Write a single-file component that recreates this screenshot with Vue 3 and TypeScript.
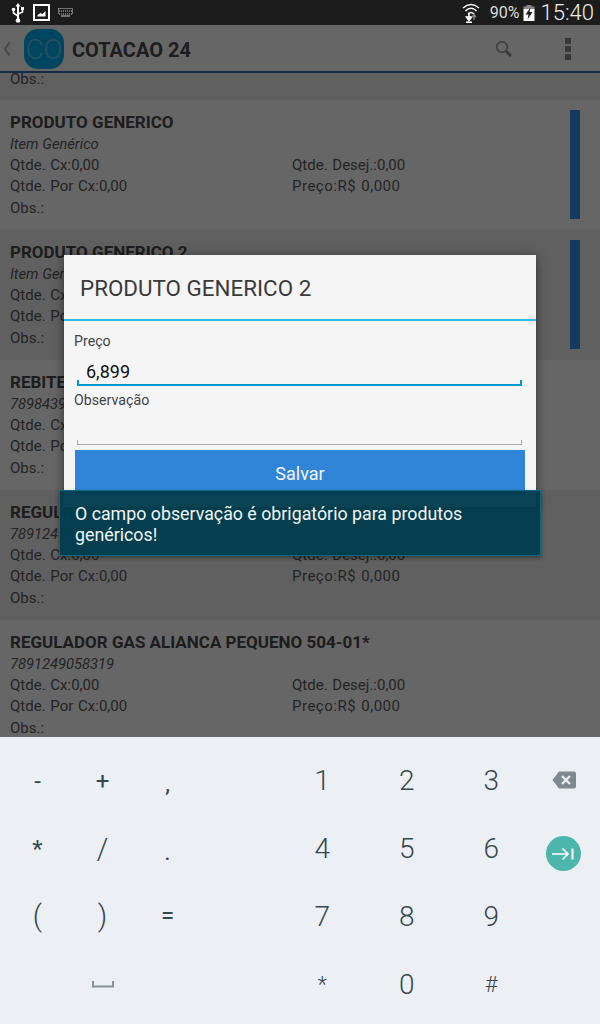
<script setup lang="ts">
interface Produto {
  nome: string
  codigo: string
  marcado?: boolean
}

const produtos: Produto[] = [
  { nome: 'PRODUTO GENERICO', codigo: 'Item Genérico', marcado: true },
  { nome: 'PRODUTO GENERICO 2', codigo: 'Item Genérico', marcado: true },
  { nome: 'REBITE POP 4,0 X 12', codigo: '7898439102214' },
  { nome: 'REGULADOR GAS ALIANCA PEQUENO', codigo: '7891249058319' },
  { nome: 'REGULADOR GAS ALIANCA PEQUENO 504-01*', codigo: '7891249058319' },
]

const simbolos = ['-', '+', ',', '*', '/', '.', '(', ')', '=', '', 'espaco', '']
const numeros = ['1', '2', '3', '4', '5', '6', '7', '8', '9', '*', '0', '#']
</script>

<template>
  <div class="tela">
    <div class="status">
      <div class="status-esq">
        <svg width="14" height="22" viewBox="0 0 14 22">
          <path d="M7 1 L9.5 4.5 H8 V17 H6 V4.5 H4.5 Z" fill="#fff" />
          <path d="M7 14 L2.5 11 V8" stroke="#fff" stroke-width="1.6" fill="none" />
          <path d="M7 12 L11.5 10 V7.5" stroke="#fff" stroke-width="1.6" fill="none" />
          <circle cx="2.5" cy="7.5" r="1.8" fill="#fff" />
          <rect x="10" y="5" width="3" height="3" fill="#fff" />
          <circle cx="7" cy="18.5" r="2.3" fill="#fff" />
        </svg>
        <svg class="ic-img" width="17" height="17" viewBox="0 0 17 17">
          <rect x="1" y="1" width="15" height="15" fill="#1c1c1c" stroke="#fff" stroke-width="2" />
          <path d="M4.5 12.5 V11 L7.5 9 L9.5 10 L12.5 7 V12.5 Z" fill="#fff" />
        </svg>
        <svg class="ic-kbd" width="15" height="9" viewBox="0 0 15 9">
          <rect x="0.5" y="0.5" width="14" height="5.5" fill="none" stroke="#ccc" stroke-width="1" stroke-dasharray="1 1" />
          <path d="M1 3 H14" stroke="#ccc" stroke-width="1" stroke-dasharray="1 1" />
          <path d="M3 8 H12" stroke="#ccc" stroke-width="1" />
        </svg>
      </div>
      <div class="status-dir">
        <svg width="18" height="22" viewBox="0 0 18 22">
          <path d="M1 6 Q9 -1 17 6 M3.5 9 Q9 3.5 14.5 9 M6 12 Q9 9 12 12" stroke="#fff" stroke-width="1.6" fill="none" />
          <path d="M7 11 V17 M4.5 15 L7 18.5 L9.5 15 Z" stroke="#fff" stroke-width="1.6" fill="#fff" />
          <path d="M12 18 V13 M10.5 14.5 L12 12 L13.5 14.5 Z" stroke="#888" stroke-width="1.3" fill="#888" />
          <rect x="4" y="19.5" width="6" height="1.5" fill="#fff" />
        </svg>
        <span class="pct">90%</span>
        <svg class="ic-bat" width="12" height="16" viewBox="0 0 12 16">
          <rect x="3.5" y="0" width="5" height="2" fill="#888" />
          <rect x="0.5" y="1.5" width="11" height="3" fill="#888" />
          <rect x="0.5" y="4" width="11" height="12" fill="#fff" />
          <path d="M7.5 2.5 L2.5 9.5 H5.5 L4.5 14.5 L9.5 7 H6.5 Z" fill="#1c1c1c" />
        </svg>
        <span class="hora">15:40</span>
      </div>
    </div>

    <div class="corpo">
      <header class="topo">
        <span class="voltar">
          <svg width="8" height="16" viewBox="0 0 8 16">
            <path d="M6.5 1.5 L2 8 L6.5 14.5" stroke="#bbb" stroke-width="2.2" fill="none" />
          </svg>
        </span>
        <span class="logo">CO</span>
        <span class="titulo">COTACAO 24</span>
        <svg class="ic-busca" width="18" height="18" viewBox="0 0 18 18">
          <circle cx="7" cy="7" r="5.3" stroke="#909090" stroke-width="1.4" fill="none" />
          <path d="M11 11 L16 16" stroke="#909090" stroke-width="3" />
        </svg>
        <span class="menu"><i></i><i></i><i></i></span>
      </header>

      <main class="lista">
        <div class="resto">Obs.:</div>
        <div v-for="(p, i) in produtos" :key="i" class="linha" :class="{ par: i % 2 === 1 }">
          <div class="nome">{{ p.nome }}</div>
          <div class="codigo">{{ p.codigo }}</div>
          <div class="campos">
            <span>Qtde. Cx:0,00</span>
            <span>Qtde. Desej.:0,00</span>
            <span>Qtde. Por Cx:0,00</span>
            <span class="preco">Preço:R$ 0,000</span>
          </div>
          <div class="obs">Obs.:</div>
          <span v-if="p.marcado" class="barra"></span>
        </div>
      </main>

      <div class="escuro"></div>

      <section class="dialogo">
        <h3>PRODUTO GENERICO 2</h3>
        <div class="form">
          <label>Preço</label>
          <div class="campo ativo">6,899</div>
          <label class="segundo">Observação</label>
          <div class="campo"></div>
          <button class="salvar">Salvar</button>
        </div>
      </section>

      <div class="toast">O campo observação é obrigatório para produtos genéricos!</div>
    </div>

    <div class="teclado">
      <div class="grade simbolos">
        <span
          v-for="(t, i) in simbolos"
          :key="i"
          class="tecla"
          :class="{ alto: t === '/' || t === '(' || t === ')', baixo: t === ',' || t === '.' }"
        >
          <svg v-if="t === 'espaco'" width="22" height="7" viewBox="0 0 22 7">
            <path d="M1 0 V5.5 H21 V0" stroke="#84929a" stroke-width="2" fill="none" />
          </svg>
          <template v-else>{{ t }}</template>
        </span>
      </div>
      <div class="grade numeros">
        <span v-for="n in numeros" :key="n" class="tecla num" :class="{ menor: n === '*' || n === '#' }">{{ n }}</span>
      </div>
      <div class="acoes">
        <svg width="24" height="18" viewBox="0 0 24 18">
          <path d="M7 0.5 H22 Q24 0.5 24 2.5 V15.5 Q24 17.5 22 17.5 H7 L0.5 9 Z" fill="#7f8a90" />
          <path d="M10 5 L18 13 M18 5 L10 13" stroke="#eceff3" stroke-width="2.2" />
        </svg>
        <span class="proximo">
          <svg width="22" height="14" viewBox="0 0 22 14">
            <path d="M0 7 H16 M10.5 1.5 L16 7 L10.5 12.5" stroke="#fff" stroke-width="1.6" fill="none" />
            <path d="M20.5 1.5 V12.5" stroke="#fff" stroke-width="2" />
          </svg>
        </span>
      </div>
    </div>
  </div>
</template>

<style>
html,
body {
  margin: 0;
  background: #eceff3;
}
</style>

<style scoped>
.tela {
  width: 600px;
  height: 1024px;
  display: flex;
  flex-direction: column;
  overflow: hidden;
  font-family: Roboto, "Liberation Sans", sans-serif;
}

.status {
  height: 25px;
  flex: none;
  background: #1c1c1c;
  display: flex;
  align-items: center;
  justify-content: space-between;
  color: #eee;
}

.status-esq {
  display: flex;
  align-items: center;
  padding-left: 11px;
}

.ic-img {
  margin-left: 8px;
}

.ic-kbd {
  margin-left: 8px;
}

.status-dir {
  display: flex;
  align-items: center;
  padding-right: 6px;
}

.pct {
  font-size: 16px;
  margin-left: 10px;
  color: #ddd;
}

.ic-bat {
  margin-left: 3px;
}

.hora {
  font-size: 22px;
  margin-left: 6px;
  color: #eee;
  font-weight: 300;
}

.corpo {
  position: relative;
  flex: 1;
  min-height: 0;
  display: flex;
  flex-direction: column;
}

.topo {
  height: 48px;
  flex: none;
  box-sizing: border-box;
  padding-top: 2px;
  background: #fff;
  border-bottom: 2px solid #2f6fb0;
  display: flex;
  align-items: center;
}

.voltar {
  width: 12px;
  margin-left: 3px;
  display: flex;
  align-items: center;
}

.logo {
  width: 40px;
  height: 40px;
  margin-left: 9px;
  border-radius: 14px;
  background: #00aef0;
  color: #6cc8ee;
  font-size: 28px;
  font-weight: 300;
  display: flex;
  align-items: center;
  justify-content: center;
}

.titulo {
  margin: 2px 0 0 8px;
  font-size: 20px;
  font-weight: 700;
  color: #4a4a4a;
}

.ic-busca {
  margin-left: auto;
}

.menu {
  width: 6px;
  margin: 0 29px 0 52px;
  display: flex;
  flex-direction: column;
  gap: 2px;
}

.menu i {
  height: 6px;
  background: #8a8a8a;
}

.lista {
  flex: 1;
  min-height: 0;
  overflow: hidden;
  background: #fff;
  color: #5a5a5a;
  font-size: 15px;
}

.resto {
  height: 27px;
  background: #f0f0f0;
  padding-left: 10px;
  line-height: 13px;
}

.linha {
  position: relative;
  height: 130px;
  box-sizing: border-box;
  padding: 12px 10px 0;
  background: #fff;
}

.linha.par {
  background: #f0f0f0;
}

.nome {
  font-size: 17px;
  font-weight: 700;
  line-height: 20px;
  color: #4a4a4a;
}

.codigo {
  font-style: italic;
  font-size: 14.7px;
  line-height: 20px;
  margin-top: 2px;
}

.campos {
  display: grid;
  grid-template-columns: 282px 1fr;
  grid-auto-rows: 21px;
  line-height: 21px;
  margin-top: 1px;
  word-spacing: 1px;
}

.preco {
  letter-spacing: 0.5px;
}

.obs {
  line-height: 21px;
  margin-top: 1px;
}

.barra {
  position: absolute;
  right: 20px;
  top: 10px;
  width: 10px;
  height: 109px;
  background: #3391ea;
}

.escuro {
  position: absolute;
  inset: 0;
  background: rgba(0, 0, 0, 0.6);
}

.dialogo {
  position: absolute;
  left: 64px;
  top: 230px;
  width: 472px;
  background: #f5f5f5;
  box-shadow: 0 2px 10px rgba(0, 0, 0, 0.5);
}

.dialogo h3 {
  margin: 0;
  height: 66px;
  box-sizing: border-box;
  padding-left: 16px;
  border-bottom: 2px solid #33b5e5;
  font-size: 22.4px;
  font-weight: 400;
  line-height: 67px;
  color: #3a3a3a;
}

.form {
  padding: 11px 11px 11px 10px;
  display: flex;
  flex-direction: column;
}

.form label {
  font-size: 14.2px;
  line-height: 18px;
  color: #444;
}

.form .segundo {
  margin-top: 5px;
}

.campo {
  height: 30px;
  margin: 6px 3px 0;
  box-sizing: border-box;
  padding: 5px 0 0 9px;
  font-size: 18px;
  line-height: 22px;
  color: #111;
  border-bottom: 1px solid #aaa;
  position: relative;
}

.campo.ativo {
  border-bottom: 2px solid #0099cc;
}

.campo::before,
.campo::after {
  content: '';
  position: absolute;
  bottom: 0;
  width: 1px;
  height: 4px;
  background: #aaa;
}

.campo.ativo::before,
.campo.ativo::after {
  width: 2px;
  background: #0099cc;
}

.campo::before {
  left: 0;
}

.campo::after {
  right: 0;
}

.salvar {
  margin: 5px 0 0 1px;
  height: 46px;
  border: none;
  background: #3085d8;
  color: #f4f8fc;
  font-family: inherit;
  font-size: 18px;
}

.toast {
  position: absolute;
  left: 59px;
  top: 465px;
  width: 482px;
  height: 66px;
  box-sizing: border-box;
  padding: 12px 15px 0;
  background: rgba(2, 62, 78, 0.97);
  border: 1px solid #0a6a84;
  box-shadow: 0 2px 4px rgba(0, 0, 0, 0.4);
  color: #f2f5f6;
  font-size: 17.8px;
  line-height: 21px;
}

.teclado {
  height: 287px;
  flex: none;
  background: #eceff3;
  display: flex;
  color: #37474f;
}

.grade {
  display: grid;
  grid-template-rows: repeat(4, 1fr);
  align-items: center;
  justify-items: center;
  padding: 10px 0 6px;
}

.simbolos {
  grid-template-columns: repeat(3, 65px);
  margin-left: 5px;
  width: 195px;
  font-size: 24px;
}

.numeros {
  grid-template-columns: repeat(3, 84.5px);
  margin-left: 80px;
  width: 253.5px;
  font-size: 28px;
  font-weight: 300;
}

.tecla {
  display: flex;
  align-items: center;
  justify-content: center;
}

.alto {
  font-size: 29px;
  font-weight: 300;
}

.baixo {
  padding-top: 6px;
}

.menor {
  font-size: 22px;
}

.acoes {
  flex: 1;
  display: flex;
  flex-direction: column;
  align-items: center;
  padding: 34px 5px 0 0;
}

.proximo {
  width: 35px;
  height: 35px;
  margin: 47px 2px 0 0;
  border-radius: 50%;
  background: #4db6ac;
  display: flex;
  align-items: center;
  justify-content: center;
}
</style>
